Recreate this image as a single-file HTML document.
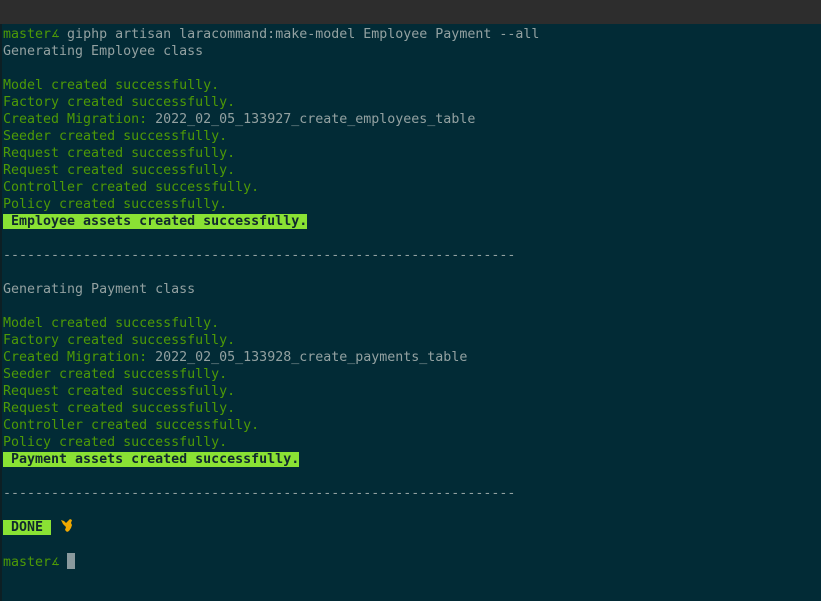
<!DOCTYPE html>
<html><head><style>
body{margin:0;width:821px;height:601px;background:#022b36;overflow:hidden;position:relative}
.bar{position:absolute;left:0;top:0;width:821px;height:24px;background:#2d2d2d}
.edge{position:absolute;left:0;top:24px;width:2px;height:577px;background:#0d1f24}
pre{position:absolute;left:3px;top:26px;margin:0;font-family:"DejaVu Sans Mono","Liberation Mono",monospace;font-size:13.3px;line-height:17px;color:#93a1a1}
.g{color:#4e9a06}
.a{color:#4e9a06;font-size:10px;display:inline-block;width:8px;overflow:hidden;vertical-align:bottom}
.hl{background:#8ae234;color:#10282e;font-weight:bold}
.cur{display:inline-block;width:8px;height:16px;background:#8a9a9e;vertical-align:-3px}
</style></head><body>
<div class="bar"></div><div class="edge"></div>
<pre><span class="g">master<span class="a">∡</span></span> giphp artisan laracommand:make-model Employee Payment --all
Generating Employee class

<span class="g">Model created successfully.
Factory created successfully.
Created Migration:</span> 2022_02_05_133927_create_employees_table
<span class="g">Seeder created successfully.
Request created successfully.
Request created successfully.
Controller created successfully.
Policy created successfully.</span>
<span class="hl"> Employee assets created successfully.</span>

----------------------------------------------------------------

Generating Payment class

<span class="g">Model created successfully.
Factory created successfully.
Created Migration:</span> 2022_02_05_133928_create_payments_table
<span class="g">Seeder created successfully.
Request created successfully.
Request created successfully.
Controller created successfully.
Policy created successfully.</span>
<span class="hl"> Payment assets created successfully.</span>

----------------------------------------------------------------

<span class="hl"> DONE </span>  

<span class="g">master<span class="a">∡</span></span> <span class="cur"></span></pre>
<svg style="position:absolute;left:60px;top:518px" width="14" height="15" viewBox="0 0 14 15"><path d="M1 2 L4 3 L6 5 L8 3 L10 1 L12 2 L11 5 L12 7 L11 10 L9 13 L7 14 L5 12 L6 9 L3 6 Z" fill="#f0a800"/></svg>
</body></html>
